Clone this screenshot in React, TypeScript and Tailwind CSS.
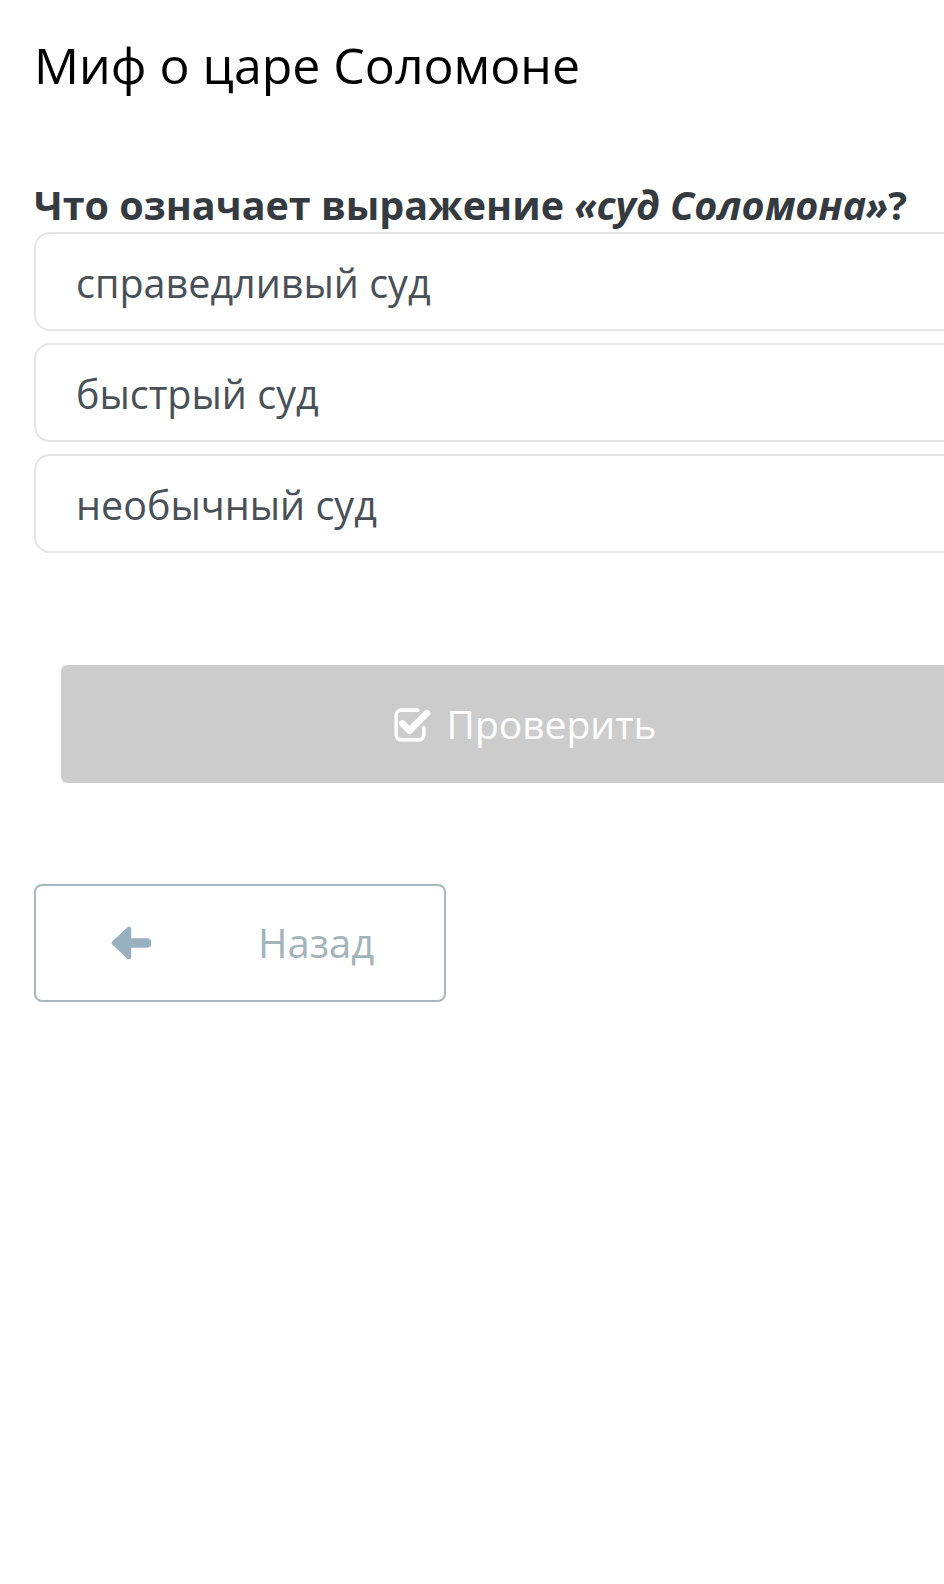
import React from "react";

const options = ["справедливый суд", "быстрый суд", "необычный суд"];

function CheckSquareIcon() {
  return (
    <svg viewBox="0 0 40 40" className="w-[41px] h-[41px]" fill="none" stroke="currentColor">
      <path d="M26 6 H10 a5 5 0 0 0 -5 5 V30 a5 5 0 0 0 5 5 H27 a5 5 0 0 0 5 -5 V23" strokeWidth="3.5" strokeLinecap="round" />
      <path d="M11 19 L18 26 L35 9" strokeWidth="6.5" strokeLinecap="round" strokeLinejoin="round" />
    </svg>
  );
}

function ArrowLeftIcon() {
  return (
    <svg viewBox="0 0 40 34" className="w-[40px] h-[34px] text-[#98b1c1]" fill="currentColor" stroke="currentColor">
      <path d="M3 17 L18 3 L18 31 Z" strokeWidth="4.5" strokeLinejoin="round" />
      <path d="M15 17 H36" strokeWidth="9.5" strokeLinecap="round" />
    </svg>
  );
}

export default function App() {
  return (
    <div className="w-[944px] h-[1584px] overflow-hidden bg-white font-['Open_Sans',sans-serif]">
      <div className="w-[1020px] pl-[34px] pt-[33px]">
        <h1 className="text-[50px] leading-[64px] font-normal text-black">Миф о царе Соломоне</h1>

        <p className="mt-[84px] text-[39.5px] leading-[48px] font-bold text-[#343a40]">
          Что означает выражение <em className="italic">«суд Соломона»</em>?
        </p>

        <div className="mt-[3px] flex flex-col gap-[12px]">
          {options.map((opt) => (
            <div
              key={opt}
              className="h-[99px] flex items-center pl-[40px] pt-[2px] border-2 border-[#e4e6e8] rounded-[16px] text-[39.5px] leading-[48px] text-[#495057]"
            >
              {opt}
            </div>
          ))}
        </div>

        <button className="mt-[112px] ml-[27px] w-[926px] h-[118px] flex items-center justify-center gap-[14px] bg-[#cccccc] rounded-[6px] text-white text-[39px]">
          <CheckSquareIcon />
          <span>Проверить</span>
        </button>

        <button className="mt-[101px] w-[412px] h-[118px] flex items-center pl-[75px] border-2 border-[#a9b8ba] rounded-[8px] bg-white">
          <ArrowLeftIcon />
          <span className="ml-[107px] text-[40px] text-[#a3b3b9]">Назад</span>
        </button>
      </div>
    </div>
  );
}
